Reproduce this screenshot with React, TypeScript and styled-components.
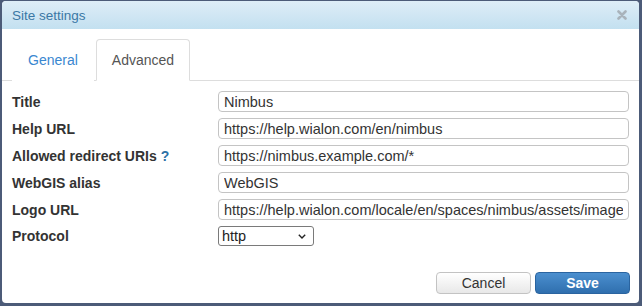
import React from "react";
import styled, { createGlobalStyle } from "styled-components";

const fields = [
  { label: "Title", value: "Nimbus" },
  { label: "Help URL", value: "https://help.wialon.com/en/nimbus" },
  { label: "Allowed redirect URIs", value: "https://nimbus.example.com/*", hint: true },
  { label: "WebGIS alias", value: "WebGIS" },
  {
    label: "Logo URL",
    value: "https://help.wialon.com/locale/en/spaces/nimbus/assets/images/logo.png",
  },
];

const App: React.FC = () => {
  return (
    <>
      <GlobalStyle />
      <Dialog>
        <Header>
          <Title>Site settings</Title>
          <CloseButton aria-label="Close">
            <svg width="10" height="10" viewBox="0 0 10 10">
              <path
                d="M1.5 1.5 L8.5 8.5 M8.5 1.5 L1.5 8.5"
                stroke="currentColor"
                strokeWidth="2.6"
                strokeLinecap="round"
              />
            </svg>
          </CloseButton>
        </Header>
        <TabList>
          <Tab>General</Tab>
          <Tab $active>Advanced</Tab>
        </TabList>
        <Form>
          {fields.map((f) => (
            <React.Fragment key={f.label}>
              <Label>
                {f.label}
                {f.hint && <Hint>?</Hint>}
              </Label>
              <Input defaultValue={f.value} />
            </React.Fragment>
          ))}
          <Label>Protocol</Label>
          <SelectWrap>
            <Select defaultValue="http">
              <option value="http">http</option>
              <option value="https">https</option>
            </Select>
            <Chevron width="8" height="5" viewBox="0 0 8 5">
              <path
                d="M0.8 0.8 L4 4 L7.2 0.8"
                fill="none"
                stroke="#222"
                strokeWidth="1.4"
              />
            </Chevron>
          </SelectWrap>
        </Form>
        <Footer>
          <Button>Cancel</Button>
          <Button $primary>Save</Button>
        </Footer>
      </Dialog>
    </>
  );
};

const GlobalStyle = createGlobalStyle`
  html, body {
    margin: 0;
    padding: 0;
    background: #4c5b78;
  }
  body {
    font-family: "Liberation Sans", Arial, sans-serif;
  }
`;

const Dialog = styled.div`
  box-sizing: border-box;
  width: 637px;
  height: 302px;
  margin: 1px 0 0 2px;
  border-radius: 4px;
  overflow: hidden;
  background: #fff;
  display: flex;
  flex-direction: column;
`;

const Header = styled.div`
  height: 28px;
  display: flex;
  align-items: center;
  justify-content: space-between;
  padding: 0 12px 0 10px;
  background: linear-gradient(#deedf7, #c3e0f0);
`;

const Title = styled.div`
  font-size: 13.5px;
  color: #3b78a5;
`;

const CloseButton = styled.span`
  display: flex;
  color: #a9b3bb;
`;

const TabList = styled.div`
  display: flex;
  padding: 10px 0 0 10px;
  border-bottom: 1px solid #ddd;
`;

const Tab = styled.div<{ $active?: boolean }>`
  box-sizing: border-box;
  height: 42px;
  display: flex;
  align-items: center;
  padding: 0 15px;
  margin: 0 2px -1px 0;
  border: 1px solid ${(p) => (p.$active ? "#ddd" : "transparent")};
  border-bottom-color: transparent;
  border-radius: 4px 4px 0 0;
  background: #fff;
  font-size: 14px;
  color: ${(p) => (p.$active ? "#555" : "#3a87d0")};
`;

const Form = styled.div`
  display: grid;
  grid-template-columns: 206px 1fr;
  row-gap: 6px;
  align-items: center;
  padding: 10px 10px 0;
`;

const Label = styled.div`
  font-size: 14px;
  font-weight: bold;
  color: #333;
`;

const Hint = styled.span`
  margin-left: 4px;
  color: #2f72a6;
`;

const Input = styled.input`
  box-sizing: border-box;
  width: 100%;
  height: 21px;
  padding: 0 5px;
  border: 1px solid #c4c4c4;
  border-radius: 4px;
  font-family: "Liberation Sans", Arial, sans-serif;
  font-size: 14.5px;
  color: #333;
  outline: none;
`;

const SelectWrap = styled.div`
  position: relative;
  width: 96px;
  height: 20px;
`;

const Select = styled.select`
  appearance: none;
  box-sizing: border-box;
  width: 100%;
  height: 100%;
  padding: 0 3px;
  border: 1px solid #7a7a7a;
  border-radius: 3px;
  background: #fff;
  font-family: "Liberation Sans", Arial, sans-serif;
  font-size: 14.5px;
  color: #222;
  outline: none;
`;

const Chevron = styled.svg`
  position: absolute;
  right: 8px;
  top: 8px;
  pointer-events: none;
`;

const Footer = styled.div`
  margin-top: auto;
  display: flex;
  justify-content: flex-end;
  gap: 4px;
  padding: 0 9px 9px;
`;

const Button = styled.button<{ $primary?: boolean }>`
  box-sizing: border-box;
  width: 95px;
  height: 22px;
  border-radius: 4px;
  font-family: "Liberation Sans", Arial, sans-serif;
  font-size: 14px;
  font-weight: ${(p) => (p.$primary ? "bold" : "normal")};
  color: ${(p) => (p.$primary ? "#fff" : "#333")};
  border: 1px solid ${(p) => (p.$primary ? "#2a64a0" : "#c3c3c3")};
  background: ${(p) =>
    p.$primary
      ? "linear-gradient(#4b8fcf, #2f6fae)"
      : "linear-gradient(#ffffff, #e8e8e8)"};
  cursor: pointer;
`;

export default App;
